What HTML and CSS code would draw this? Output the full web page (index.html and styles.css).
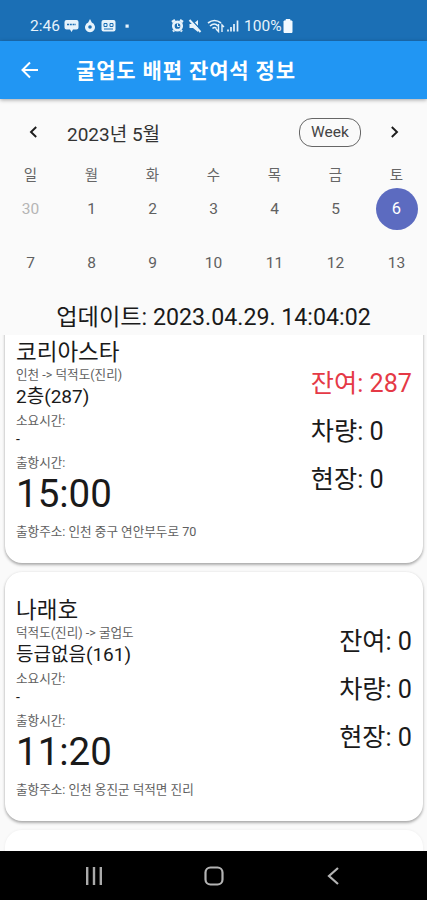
FILE: index.html
```html
<!DOCTYPE html>
<html lang="ko">
<head>
<meta charset="utf-8">
<title>굴업도 배편 잔여석 정보</title>
<link rel="stylesheet" href="styles.css">
</head>
<body>
<div class="status">
  <span class="clock">2:46</span>
  <svg class="status-left" width="70" height="18" viewBox="0 0 70 18" fill="#e7f3fb">
    <path d="M2.500 3h10q2 0 2 2v5.500q0 2-2 2H9L7.500 15 6 12.500H2.500q-2 0-2-2V5q0-2 2-2z"/>
    <path d="M3 7.500h9" stroke="#1b6fb5" stroke-width="1.500" stroke-dasharray="2 .8"/>
    <path d="M26 2l1.800 3.600a5 5 0 1 1-3.600 0z"/><circle cx="26" cy="10" r="1.800" fill="#1b6fb5"/>
    <rect x="37.500" y="3" width="14" height="11.500" rx="2"/>
    <path d="M40 6.500h3v3h-3zM46 6.500h3v3h-3zM40 12h9" stroke="#1b6fb5" fill="none"/>
    <rect x="61.500" y="7.500" width="3.200" height="3.200"/>
  </svg>
  <svg class="status-right" width="70" height="18" viewBox="0 0 70 18" fill="none" stroke="#e7f3fb">
    <path d="M1 5l3-2M12 5L9 3M3 13.500l-1 1M10 13.500l1 1" stroke-width="2.400"/><circle cx="6.500" cy="9" r="4.200" stroke-width="2.700"/><path d="M6.500 6.500v3h2"/>
    <path d="M18.500 7h3.500l5-4v12l-5-4h-3.500z" fill="#e7f3fb" stroke="none"/><path d="M20 2.500l11 11.500" stroke="#1b6fb5" stroke-width="1.500"/><path d="M18.500 3l11 12" stroke-width="2"/>
    <path d="M37 6q6.500-5 13 0M39 9q4.500-4 8 0M41.500 11.500q2-2 4 0" stroke-width="1.600"/><path d="M47.500 7v7.500l-2.500-2.500M51 15V8l2 2" stroke-width="1.400"/>
    <path d="M57 14.500v-2M60 14.500V10M63 14.500V7M66.500 14.500V3.500" stroke-width="1.700"/>
  </svg>
  <span class="percent">100%</span>
  <svg class="battery" width="10" height="14" viewBox="0 0 10 14"><path d="M3 .5h4V2h2v11.500H1V2h2z" fill="#f2f9ff" stroke="#f2f9ff" stroke-linejoin="round"/></svg>
</div>
<header class="appbar">
  <svg width="18" height="18" viewBox="0 0 18 18" fill="none" stroke="#fff" stroke-width="2"><path d="M17 9H2M9 1.500L1.500 9 9 16.500"/></svg>
  <h1>굴업도 배편 잔여석 정보</h1>
</header>
<section class="calendar">
  <div class="month-row">
    <svg width="9" height="12" viewBox="0 0 9 12" fill="none" stroke="#1c1c1c" stroke-width="1.900"><path d="M7.200 1L2 6l5.200 5"/></svg>
    <span class="month">2023년 5월</span>
    <span class="week">Week</span>
    <svg width="9" height="12" viewBox="0 0 9 12" fill="none" stroke="#1c1c1c" stroke-width="1.900"><path d="M1.800 1L7 6l-5.200 5"/></svg>
  </div>
  <div class="grid names"><span>일</span><span>월</span><span>화</span><span>수</span><span>목</span><span>금</span><span>토</span></div>
  <div class="grid days"><span class="out">30</span><span>1</span><span>2</span><span>3</span><span>4</span><span>5</span><span><b class="selected">6</b></span></div>
  <div class="grid days"><span>7</span><span>8</span><span>9</span><span>10</span><span>11</span><span>12</span><span>13</span></div>
</section>
<p class="updated"><span>업데이트: 2023.04.29. 14:04:02</span></p>
<main class="list">
  <article class="card">
    <div class="trip">
      <h2>코리아스타</h2>
      <p class="small route">인천 -&gt; 덕적도(진리)</p>
      <p class="grade">2층(287)</p>
      <p class="small label">소요시간:</p>
      <p class="dash">-</p>
      <p class="small label">출항시간:</p>
      <p class="time">15:00</p>
      <p class="small address">출항주소: 인천 중구 연안부두로 70</p>
    </div>
    <div class="seats"><p class="left">잔여: 287</p><p>차량: 0</p><p>현장: 0</p></div>
  </article>
  <article class="card">
    <div class="trip">
      <h2>나래호</h2>
      <p class="small route">덕적도(진리) -&gt; 굴업도</p>
      <p class="grade">등급없음(161)</p>
      <p class="small label">소요시간:</p>
      <p class="dash">-</p>
      <p class="small label">출항시간:</p>
      <p class="time">11:20</p>
      <p class="small address">출항주소: 인천 옹진군 덕적면 진리</p>
    </div>
    <div class="seats"><p>잔여: 0</p><p>차량: 0</p><p>현장: 0</p></div>
  </article>
  <article class="card"></article>
</main>
<nav class="navbar">
  <svg width="18" height="18" viewBox="0 0 18 18" stroke="#aaa" stroke-width="2.400"><path d="M2.200 0v18M9 0v18M15.800 0v18"/></svg>
  <svg width="20" height="20" viewBox="0 0 20 20" fill="none" stroke="#b4b4b4" stroke-width="2.200"><rect x="1.500" y="1.500" width="17" height="17" rx="5"/></svg>
  <svg width="18" height="18" viewBox="0 0 18 18" fill="none" stroke="#b4b4b4" stroke-width="2.200"><path d="M13 1L4 9l9 8"/></svg>
</nav>
</body>
</html>
```
FILE: styles.css
```css
* { box-sizing: border-box; margin: 0; padding: 0; }
body {
  width: 427px; height: 900px; overflow: hidden;
  display: flex; flex-direction: column;
  background: #fafafa; color: #1a1a1a;
  font-family: Roboto, "Noto Sans CJK KR", sans-serif;
  white-space: nowrap;
}
svg { flex: none; display: block; }
.status {
  height: 41px; flex: none; display: flex; align-items: center;
  padding: 10px 0 0 30px; background: #1b6fb5; color: #e7f3fb; font-size: 15.500px;
}
.clock { width: 34px; }
.status-left { width: 70px; }
.status-right { margin-left: 37px; }
.percent { margin-left: 3px; width: 38px; }
.battery { margin-left: 1px; }
.appbar {
  height: 58px; flex: none; display: flex; align-items: center;
  padding-left: 21px; gap: 37px; background: #2196f3; color: #fff;
  box-shadow: 0 1px 4px rgba(0,0,0,.35); position: relative;
}
.appbar h1 { font-size: 21px; font-weight: 700; line-height: 30px; letter-spacing: .85px; padding-top: 1px; }
.calendar { flex: none; height: 194px; padding-top: 14px; }
.month-row { height: 38px; display: flex; align-items: center; padding: 0 28px 0 29px; }
.month { margin-left: 29px; font-size: 19px; color: #333; flex: 1; }
.week {
  width: 62px; height: 29px; border: 1px solid #666; border-radius: 13px;
  text-align: center; line-height: 27px; font-size: 15.500px; color: #444; margin-right: 29px;
}
.grid { display: grid; grid-template-columns: repeat(7, 61px); text-align: center; }
.names { height: 31px; margin-top: 1px; padding-top: 8px; font-size: 14.500px; line-height: 31px; color: #666; }
.days { height: 54px; line-height: 55px; font-size: 15.500px; color: #606060; }
.names + .days { margin-top: -1px; }
.out { color: #b5b5b5; }
.selected {
  display: inline-block; width: 42px; height: 42px; line-height: 42px;
  border-radius: 50%; background: #5c6bc0; color: #fff; font-weight: 400; font-size: 16.500px;
}
.updated { flex: none; height: 42px; line-height: 48px; text-align: center; font-size: 23.200px; }
.list { flex: 1; overflow: hidden; padding: 0 4px 0 5px; }
.card {
  height: 249px; margin-bottom: 9px; padding: 25px 11px 0; background: #fff;
  border-radius: 17px; display: flex; justify-content: space-between;
  box-shadow: 0 2px 3px rgba(0,0,0,.3), 0 0 3px rgba(0,0,0,.08);
}
.card:first-child { margin-top: -21px; }
.card:last-child { box-shadow: 0 0 3px rgba(0,0,0,.06); }
h2 { font-size: 22.500px; line-height: 26px; font-weight: 400; }
.small { font-size: 12.600px; color: #606060; }
.route { line-height: 20px; }
.grade { font-size: 19px; line-height: 24px; }
.label { line-height: 23px; }
.dash { font-size: 14px; line-height: 14px; height: 19px; }
.time { font-size: 38.500px; line-height: 39px; }
.address { line-height: 38px; }
.seats { padding-top: 21px; font-size: 25.200px; line-height: 48px; }
.left { color: #e53946; }
.navbar {
  height: 49px; flex: none; background: #000; display: flex; align-items: center;
  justify-content: space-between; padding: 1px 84px 0 85px;
}
```
